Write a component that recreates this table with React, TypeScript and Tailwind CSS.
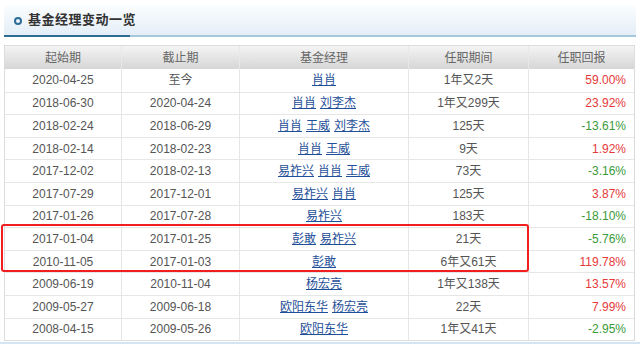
import React from "react";

type Row = {
  start: string;
  end: string;
  managers: string[];
  period: string;
  ret: string;
};

const rows: Row[] = [
  { start: "2020-04-25", end: "至今", managers: ["肖肖"], period: "1年又2天", ret: "59.00%" },
  { start: "2018-06-30", end: "2020-04-24", managers: ["肖肖", "刘李杰"], period: "1年又299天", ret: "23.92%" },
  { start: "2018-02-24", end: "2018-06-29", managers: ["肖肖", "王威", "刘李杰"], period: "125天", ret: "-13.61%" },
  { start: "2018-02-14", end: "2018-02-23", managers: ["肖肖", "王威"], period: "9天", ret: "1.92%" },
  { start: "2017-12-02", end: "2018-02-13", managers: ["易祚兴", "肖肖", "王威"], period: "73天", ret: "-3.16%" },
  { start: "2017-07-29", end: "2017-12-01", managers: ["易祚兴", "肖肖"], period: "125天", ret: "3.87%" },
  { start: "2017-01-26", end: "2017-07-28", managers: ["易祚兴"], period: "183天", ret: "-18.10%" },
  { start: "2017-01-04", end: "2017-01-25", managers: ["彭敢", "易祚兴"], period: "21天", ret: "-5.76%" },
  { start: "2010-11-05", end: "2017-01-03", managers: ["彭敢"], period: "6年又61天", ret: "119.78%" },
  { start: "2009-06-19", end: "2010-11-04", managers: ["杨宏亮"], period: "1年又138天", ret: "13.57%" },
  { start: "2009-05-27", end: "2009-06-18", managers: ["欧阳东华", "杨宏亮"], period: "22天", ret: "7.99%" },
  { start: "2008-04-15", end: "2009-05-26", managers: ["欧阳东华"], period: "1年又41天", ret: "-2.95%" },
];

const font = { fontFamily: '"Liberation Sans", "Noto Sans CJK SC", sans-serif' };

export default function App() {
  return (
    <div className="relative w-[640px] h-[347px] bg-white overflow-hidden text-[12px]" style={font}>
      <div className="pt-[5px] pl-[4px] pr-[4px]">
        {/* panel header */}
        <div className="h-[32px] rounded-t-[4px] bg-gradient-to-b from-[#fbfdfe] to-[#e4eef7] flex items-center pl-[10px] gap-[6px] border-b-2 border-[#a7c7dd] relative">
          <span className="w-[8px] h-[8px] rounded-full border-2 border-[#2c6c9a] mt-[1px]" />
          <span className="font-bold text-[13px] text-[#333] tracking-[0.5px]">基金经理变动一览</span>
          <div className="absolute left-0 bottom-[-2px] w-[126px] h-[2px] bg-[#2d6d92]" />
        </div>
        {/* table */}
        <div className="mt-[8px] mr-[1px] border border-[#dcdcdc] text-[#555]">
          <div className="grid grid-cols-[117px_118px_169px_120px_1fr] h-[23px] bg-gradient-to-b from-[#f4f4f4] to-[#d6d6d6] text-[#666]">
            {["起始期", "截止期", "基金经理", "任职期间", "任职回报"].map((h, i) => (
              <div key={h} className={`flex items-center justify-center ${i < 4 ? "border-r border-[#e8e8e8]" : ""}`}>
                {h}
              </div>
            ))}
          </div>
          {rows.map((r, idx) => {
            const neg = r.ret.startsWith("-");
            return (
              <div
                key={idx}
                className={`grid grid-cols-[117px_118px_169px_120px_1fr] h-[22.6px] ${idx > 0 ? "border-t border-[#e6e6e6]" : ""}`}
              >
                <div className="flex items-center justify-center border-r border-[#e6e6e6]">{r.start}</div>
                <div className="flex items-center justify-center border-r border-[#e6e6e6]">{r.end}</div>
                <div className="flex items-center justify-center gap-[4px] border-r border-[#e6e6e6]">
                  {r.managers.map((m) => (
                    <a key={m} className="text-[#1f4f98] underline underline-offset-1">
                      {m}
                    </a>
                  ))}
                </div>
                <div className="flex items-center justify-center border-r border-[#e6e6e6]">{r.period}</div>
                <div className={`flex items-center justify-end pr-[8px] ${neg ? "text-[#3a9a3a]" : "text-[#e53a3a]"}`}>
                  {r.ret}
                </div>
              </div>
            );
          })}
        </div>
      </div>
      <div className="absolute left-0 right-0 top-[342px] h-[2px] bg-[#d4e5f1]" />
      {/* red highlight box */}
      <div className="absolute left-[1px] top-[224px] w-[528px] h-[48px] border-2 border-[#f01e1e] rounded-[3px]" />
    </div>
  );
}
